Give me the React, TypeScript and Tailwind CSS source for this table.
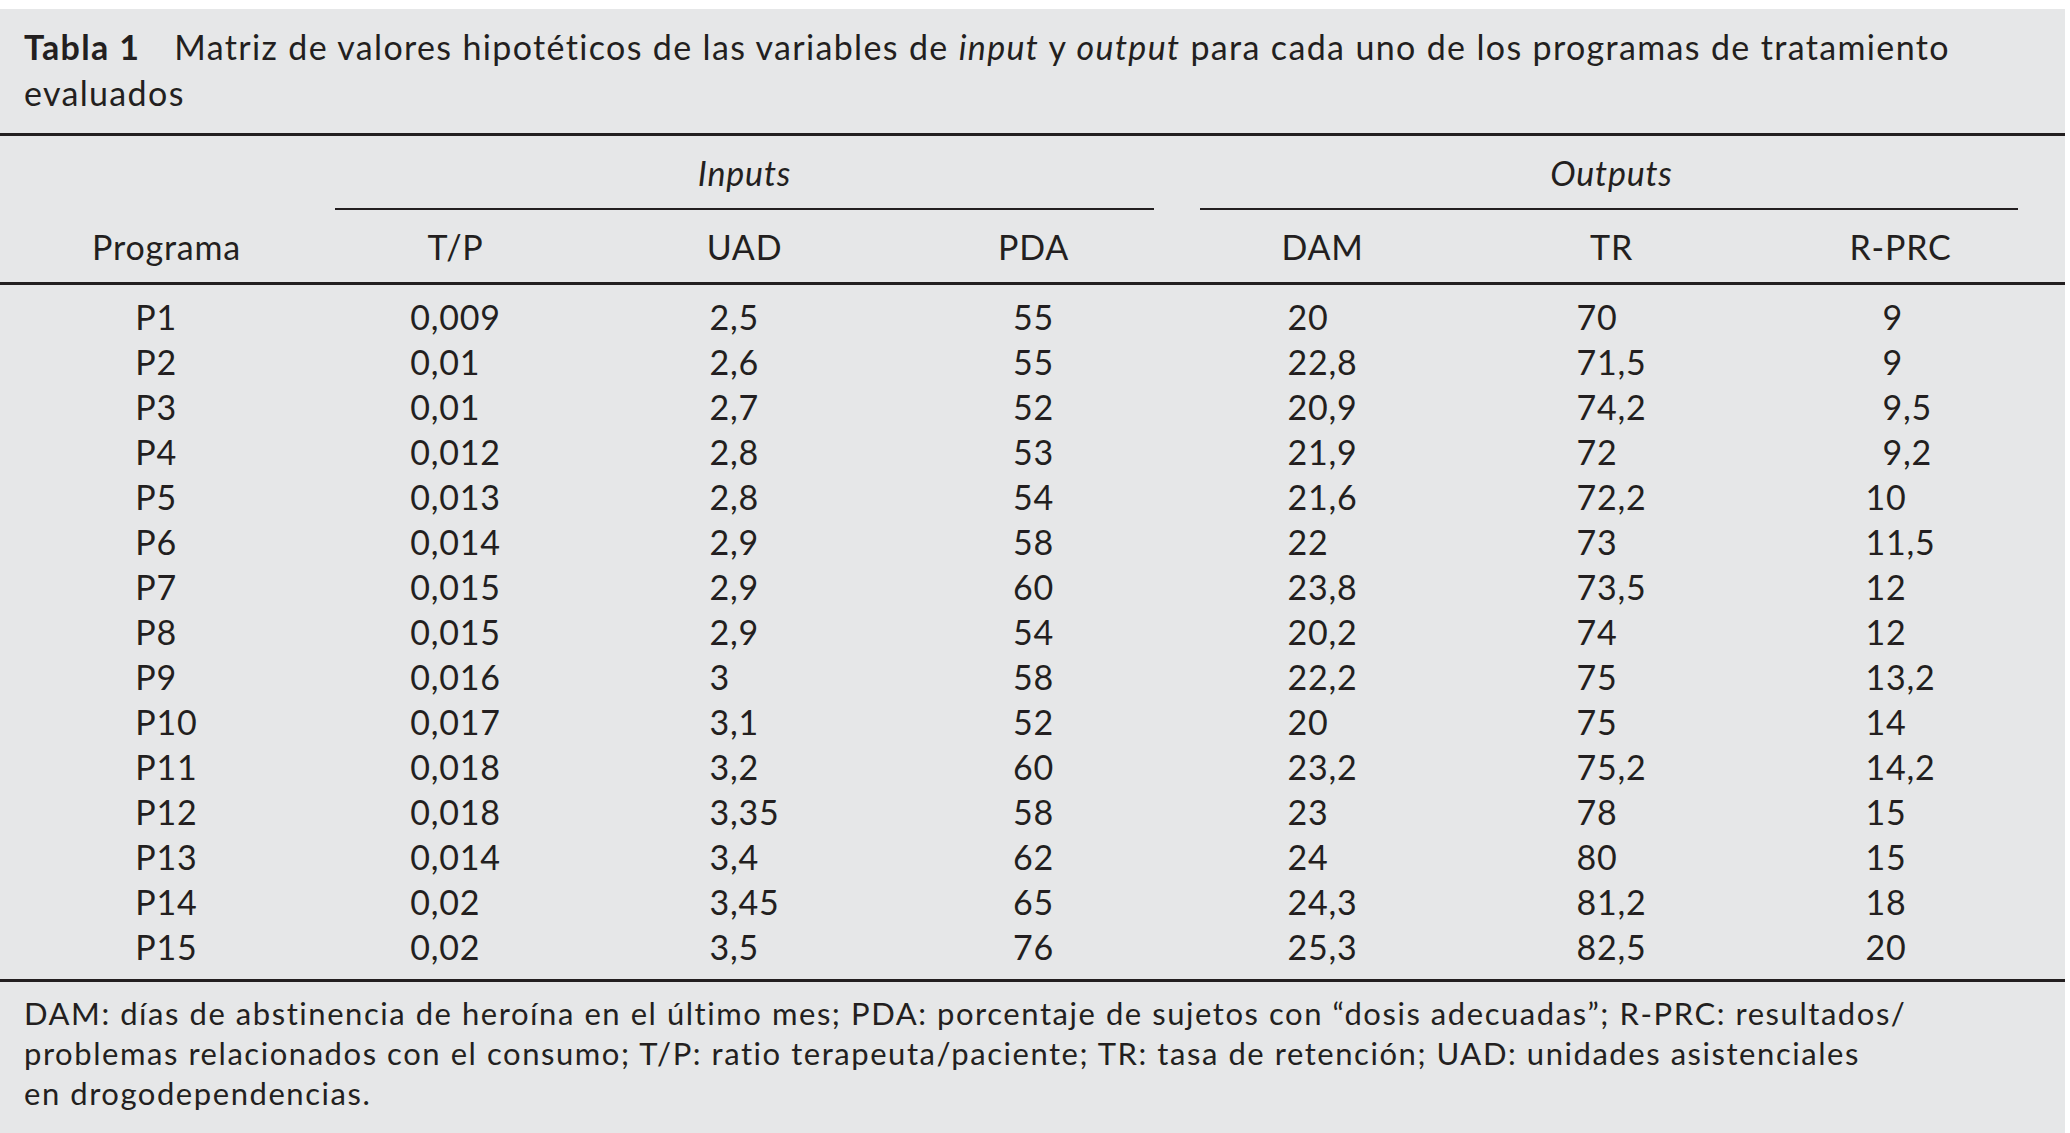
import React from 'react';

// Columnas de la tabla: cabecera + valores
const columns = [
  { key: 'programa', label: 'Programa', values: ['P1', 'P2', 'P3', 'P4', 'P5', 'P6', 'P7', 'P8', 'P9', 'P10', 'P11', 'P12', 'P13', 'P14', 'P15'] },
  { key: 'tp', label: 'T/P', values: ['0,009', '0,01', '0,01', '0,012', '0,013', '0,014', '0,015', '0,015', '0,016', '0,017', '0,018', '0,018', '0,014', '0,02', '0,02'] },
  { key: 'uad', label: 'UAD', values: ['2,5', '2,6', '2,7', '2,8', '2,8', '2,9', '2,9', '2,9', '3', '3,1', '3,2', '3,35', '3,4', '3,45', '3,5'] },
  { key: 'pda', label: 'PDA', values: ['55', '55', '52', '53', '54', '58', '60', '54', '58', '52', '60', '58', '62', '65', '76'] },
  { key: 'dam', label: 'DAM', values: ['20', '22,8', '20,9', '21,9', '21,6', '22', '23,8', '20,2', '22,2', '20', '23,2', '23', '24', '24,3', '25,3'] },
  { key: 'tr', label: 'TR', values: ['70', '71,5', '74,2', '72', '72,2', '73', '73,5', '74', '75', '75', '75,2', '78', '80', '81,2', '82,5'] },
  { key: 'rprc', label: 'R-PRC', values: ['9', '9', '9,5', '9,2', '10', '11,5', '12', '12', '13,2', '14', '14,2', '15', '15', '18', '20'] },
];

export default function App() {
  return (
    <div className="min-h-screen bg-white pt-[9px] pr-[5px] font-[Lato,sans-serif] text-[#231f20]">
      <div className="min-h-[1124px] bg-[#e6e7e8]">
        {/* Título */}
        <div className="px-[24px] pt-[15px] text-[34px] leading-[46px] tracking-[1.35px] whitespace-nowrap">
          <span className="font-bold">Tabla 1</span>
          <span className="ml-[34px]">
            Matriz de valores hipotéticos de las variables de <i>input</i> y <i>output</i> para cada uno de los programas de tratamiento
          </span>
          <br />
          evaluados
        </div>

        <div className="mt-[17px] h-[3px] bg-[#231f20]" />

        {/* Cabecera agrupada */}
        <div className="ml-[22px] grid w-[2023px] grid-cols-7 pt-[14px] text-[34px] leading-[46px] tracking-[0.8px]">
          <div className="col-span-3 col-start-2 flex flex-col">
            <div className="text-center italic">Inputs</div>
            <div className="mx-[24px] mt-[12px] h-[2px] bg-[#231f20]" />
          </div>
          <div className="col-span-3 col-start-5 flex flex-col">
            <div className="text-center italic">Outputs</div>
            <div className="ml-[22px] mr-[27px] mt-[12px] h-[2px] bg-[#231f20]" />
          </div>
        </div>

        <div className="ml-[22px] mt-[14px] grid w-[2023px] grid-cols-7 text-[34px] leading-[46px] tracking-[0.8px]">
          {columns.map((col) => (
            <div key={col.key} className="text-center">
              {col.label}
            </div>
          ))}
        </div>

        <div className="mt-[12px] h-[3px] bg-[#231f20]" />

        {/* Valores */}
        <div className="ml-[22px] mt-[9px] grid w-[2023px] grid-cols-7 text-[34px] leading-[45px] tracking-[0.8px]">
          {columns.map((col) => (
            <div key={col.key} className="flex justify-center">
              <div className="flex flex-col">
                {col.values.map((v, i) => (
                  <div
                    key={i}
                    className={`h-[45px] whitespace-nowrap ${
                      col.key === 'rprc' && v.split(',')[0].length === 1 ? 'pl-[17px]' : ''
                    }`}
                  >
                    {v}
                  </div>
                ))}
              </div>
            </div>
          ))}
        </div>

        <div className="mt-[10px] h-[3px] bg-[#231f20]" />

        {/* Nota */}
        <div className="px-[24px] pt-[11px] pb-[20px] text-[31px] leading-[40px] tracking-[1.55px] whitespace-nowrap">
          DAM: días de abstinencia de heroína en el último mes; PDA: porcentaje de sujetos con “dosis adecuadas”; R-PRC: resultados/
          <br />
          problemas relacionados con el consumo; T/P: ratio terapeuta/paciente; TR: tasa de retención; UAD: unidades asistenciales
          <br />
          en drogodependencias.
        </div>
      </div>
    </div>
  );
}
